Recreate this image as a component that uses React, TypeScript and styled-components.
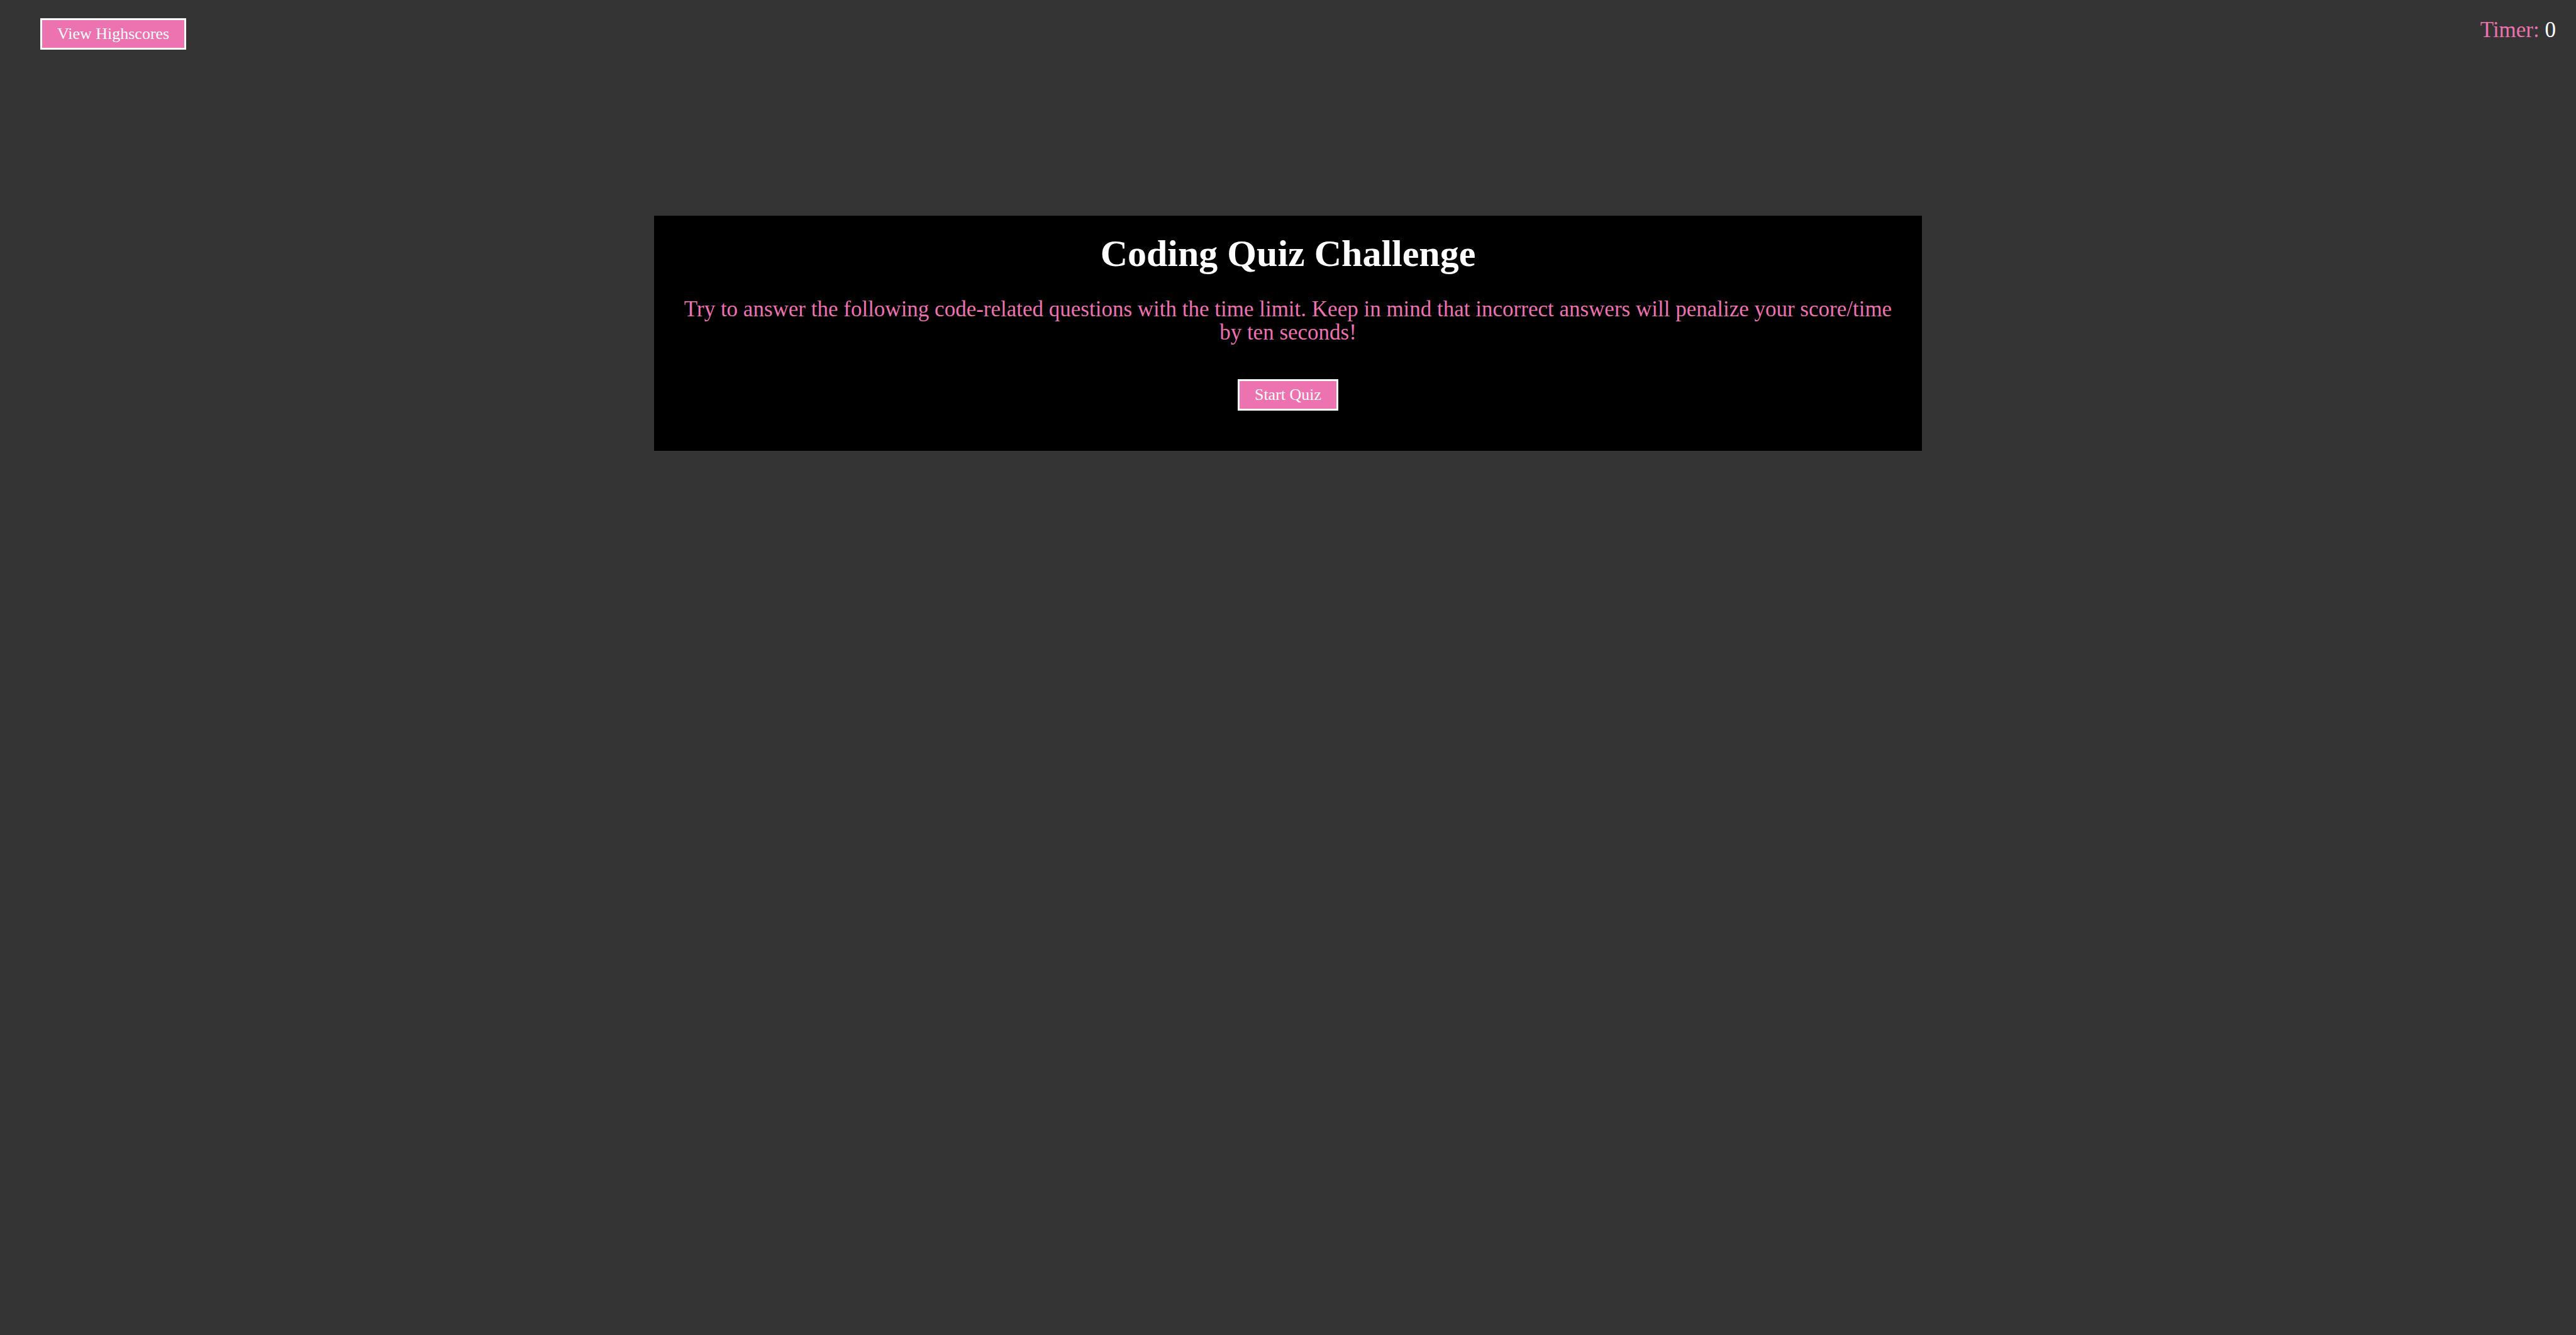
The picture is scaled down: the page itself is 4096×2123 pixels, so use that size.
import React from "react";
import styled, { createGlobalStyle } from "styled-components";

const GlobalStyle = createGlobalStyle`
  * { box-sizing: border-box; }
  body {
    margin: 0;
    min-height: 100vh;
    background: #343434;
    color: #ec72b0;
    font-family: Georgia, "Liberation Serif", serif;
    font-size: 35px;
    line-height: 37px;
  }
`;

const TopBar = styled.header`
  display: flex;
  justify-content: space-between;
  align-items: flex-start;
  padding: 29px 32px 0 64px;
`;

const Button = styled.button`
  height: 50px;
  padding: 0 24px;
  border: 3px solid #ffffff;
  background: #ec72b0;
  color: #ffffff;
  font-family: inherit;
  font-size: 26px;
  line-height: 40px;
  cursor: pointer;
`;

const Timer = styled.div`
  white-space: nowrap;
`;

const Count = styled.span`
  color: #ffffff;
`;

const Card = styled.main`
  display: flex;
  flex-direction: column;
  align-items: center;
  max-width: 2016px;
  margin: 264px auto 0;
  padding: 30px 40px 64px;
  background: #000000;
  text-align: center;
`;

const Title = styled.h1`
  margin: 0;
  color: #ffffff;
  font-size: 60px;
  line-height: 60px;
`;

const Intro = styled.p`
  margin: 40px 0 56px;
`;

export default function App() {
  return (
    <>
      <GlobalStyle />
      <TopBar>
        <Button type="button">View Highscores</Button>
        <Timer>
          Timer: <Count>0</Count>
        </Timer>
      </TopBar>
      <Card>
        <Title>Coding Quiz Challenge</Title>
        <Intro>
          Try to answer the following code-related questions with the time limit. Keep in mind that
          incorrect answers will penalize your score/time by ten seconds!
        </Intro>
        <Button type="button">Start Quiz</Button>
      </Card>
    </>
  );
}
